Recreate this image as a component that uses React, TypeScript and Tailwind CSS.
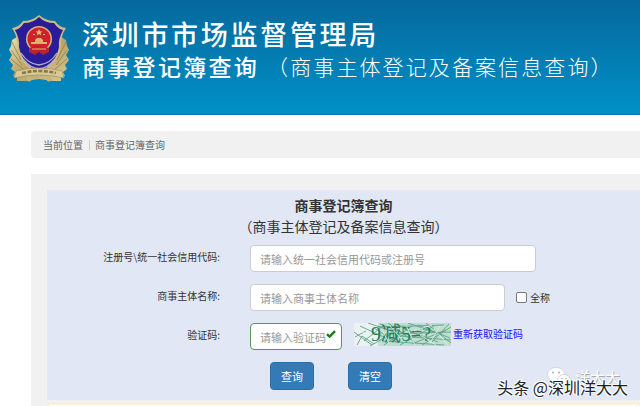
import { useState } from 'react';

function Emblem() {
  return (
    <svg viewBox="0 0 62 68" className="h-[68px] w-[62px] shrink-0" aria-hidden="true">
      <defs>
        <linearGradient id="gold" x1="0" y1="0" x2="1" y2="1">
          <stop offset="0" stopColor="#e9dfb0" />
          <stop offset="0.5" stopColor="#b9a468" />
          <stop offset="1" stopColor="#d9cb93" />
        </linearGradient>
      </defs>
      <path
        d="M9 22 L4 25 L3 31 L1 35 L4 40 L1 45 L5 50 L3 54 L7 57 L5 61 L9 63 L9 66 L17 66 L31 64 L45 66 L53 66 L53 63 L57 61 L55 57 L59 54 L57 50 L61 45 L58 40 L61 35 L59 31 L58 25 L53 22 Z"
        fill="url(#gold)"
      />
      <path d="M4 27 L13 45 M3 35 L14 50 M3 44 L15 54 M58 27 L49 45 M59 35 L48 50 M59 44 L47 54" stroke="#8f7d4b" strokeWidth="0.8" />
      <path d="M31 0 Q24 6 15 6 Q11 12 4 13 Q10 22 9 32 Q12 50 31 60 Q50 50 53 32 Q52 22 58 13 Q51 12 47 6 Q38 6 31 0 Z" fill="#cdbb80" />
      <path d="M31 2 Q25 8 16 8 Q12 14 7 15 Q12 24 11 32 Q14 48 31 58 Q48 48 51 32 Q50 24 55 15 Q50 14 46 8 Q37 8 31 2 Z" fill="#2a1c98" />
      <path d="M13 38 Q20 49 31 50 Q42 49 49 38 M16 45 Q22 53 31 54 Q40 53 46 45" fill="none" stroke="#b5add0" strokeWidth="1.3" />
      <circle cx="31" cy="24" r="13" fill="#d6b973" />
      <circle cx="31" cy="24" r="11.5" fill="#d0202c" />
      <path d="M31 14 l1 2.2 2.4 .2 -1.8 1.6 .6 2.3 -2.2 -1.3 -2.2 1.3 .6 -2.3 -1.8 -1.6 2.4 -.2 Z" fill="#e5bf68" />
      <path d="M25 19 h2 v1 h-2 Z M35 19 h2 v1 h-2 Z M27 25 l2 -2 h4 l2 2 v2 h4 v2 h-16 v-2 h4 Z" fill="#dcb36a" />
      <path d="M21 33 L31 31 L41 33 L41 37 L35 40 L31 37 L27 40 L21 37 Z" fill="#c02030" />
      <path d="M24 34 h14" stroke="#dcb36a" strokeWidth="1" />
      <path d="M8 56 Q31 50 54 56 L56 63 Q31 57 6 63 Z" fill="#d8ca97" stroke="#9a8753" strokeWidth="0.6" />
      <path d="M14 58 Q31 54 48 58" fill="none" stroke="#8a7843" strokeWidth="2.6" strokeDasharray="4 1.5" />
      <circle cx="21" cy="64" r="2.5" fill="#c7b67c" />
      <circle cx="41" cy="64" r="2.5" fill="#c7b67c" />
    </svg>
  );
}

function Captcha() {
  return (
    <svg viewBox="0 0 97 23" className="h-[23px] w-[97px] shrink-0" role="img" aria-label="9减5=?">
      <rect width="97" height="23" fill="#edf1f3" />
      <rect x="24" width="73" height="23" fill="#9ccbb8" opacity="0.55" />
      <path
        d="M0 9 L18 22 M1 14 L12 8 M3 22 L8 13 L20 21 M6 3 L32 15 M10 18 L30 2 M14 0 L40 9 M16 23 L46 6 M20 5 L44 20 M26 1 L60 14 M30 22 L58 3 M34 0 L62 20 M38 16 L70 5 M42 1 L74 17 M46 22 L80 3 M50 6 L84 19 M54 0 L88 12 M58 21 L92 7 M64 2 L96 15 M68 22 L97 4 M72 0 L97 20 M78 19 L95 1 M32 11 L97 9 M28 18 L90 22 M24 4 L90 2 M45 13 L97 17"
        fill="none"
        stroke="#5ba587"
        strokeWidth="0.9"
      />
      <text x="17" y="18" className="font-['Liberation_Serif','Noto_Sans_CJK_SC',serif] text-[20px]" fill="#23805a">
        9减5=?
      </text>
      <path
        d="M4 5 L16 15 M28 7 L35 20 M36 3 L50 19 M52 2 L61 22 M60 8 L78 2 M66 12 L82 22 M80 6 L94 22 M86 3 L76 20"
        fill="none"
        stroke="#e3f0ea"
        strokeWidth="0.8"
      />
    </svg>
  );
}

function WechatIcon() {
  return (
    <svg viewBox="0 0 24 20" className="h-5 w-6" aria-hidden="true">
      <ellipse cx="9" cy="7.5" rx="8.5" ry="7" fill="#fff" stroke="#c3c8d3" strokeWidth="0.6" />
      <path d="M3 12 L3 17 L8 14 Z" fill="#fff" />
      <ellipse cx="17" cy="13" rx="6.5" ry="5.5" fill="#fff" stroke="#b4b9c4" strokeWidth="0.6" />
      <circle cx="6" cy="5.5" r="1" fill="#a5aab8" />
      <circle cx="12" cy="5.5" r="1" fill="#a5aab8" />
      <circle cx="15" cy="11.5" r="0.8" fill="#a5aab8" />
      <circle cx="19" cy="11.5" r="0.8" fill="#a5aab8" />
    </svg>
  );
}

const rowClass = 'flex items-center';
const labelClass = 'mr-[30px] w-[173px] shrink-0 pb-1 text-right text-[10px] text-[#333]';
const inputClass =
  'h-[27px] rounded border border-[#ccc] bg-white px-[9px] text-[11px] text-[#555] outline-none placeholder:text-[#999]';
const buttonClass =
  'h-7 w-11 rounded border border-[#2e6da4] bg-[#337ab7] text-[11px] text-white hover:bg-[#286090]';

export default function App() {
  const [code, setCode] = useState('');
  const [name, setName] = useState('');
  const [captcha, setCaptcha] = useState('');
  const [exact, setExact] = useState(false);

  const handleClear = () => {
    setCode('');
    setName('');
    setCaptcha('');
    setExact(false);
  };

  return (
    <div className="relative h-screen overflow-hidden bg-white font-['Noto_Sans_CJK_SC',sans-serif]">
      <header className="flex h-[115px] items-start gap-3 border-b-2 border-[#0a7fb5] bg-linear-to-b from-[#05699d] to-[#0090c6] pt-[15px] pl-2 text-white">
        <Emblem />
        <div className="whitespace-nowrap">
          <h1 className="text-[27px] leading-[38px] font-medium tracking-widest">深圳市市场监督管理局</h1>
          <p className="flex items-center gap-2 leading-[26px]">
            <span className="text-[23px] font-medium tracking-widest">商事登记簿查询</span>
            <span className="text-[21px] font-light tracking-widest">（商事主体登记及备案信息查询）</span>
          </p>
        </div>
      </header>

      <nav className="mt-4 ml-[31px] flex h-[27px] items-center rounded-l bg-[#f1f1f1] px-3 text-[10px] text-[#666]">
        <span>当前位置</span>
        <span className="ml-[6px] h-[10px] border-l border-[#ccc]" />
        <a href="#" className="ml-[5px]">商事登记簿查询</a>
      </nav>

      <main className="mt-4 ml-[31px] bg-[#f1f1f1] pt-4 pl-4">
        <form className="bg-[#e1e7f5] pt-[5px] pb-[10px]" onSubmit={(e) => e.preventDefault()}>
          <h2 className="text-center text-[14px] leading-[21px] text-[#333]">
            <span className="block font-bold">商事登记簿查询</span>
            <span className="block">（商事主体登记及备案信息查询）</span>
          </h2>

          <div className="mt-2 flex flex-col gap-3">
            <div className={rowClass}>
              <label htmlFor="code" className={labelClass}>注册号\统一社会信用代码:</label>
              <input
                id="code"
                className={`${inputClass} w-[286px]`}
                placeholder="请输入统一社会信用代码或注册号"
                value={code}
                onChange={(e) => setCode(e.target.value)}
              />
            </div>
            <div className={rowClass}>
              <label htmlFor="name" className={labelClass}>商事主体名称:</label>
              <input
                id="name"
                className={`${inputClass} w-[255px]`}
                placeholder="请输入商事主体名称"
                value={name}
                onChange={(e) => setName(e.target.value)}
              />
              <label className="ml-[11px] flex items-center gap-[3px] text-[10px] text-[#333]">
                <input
                  type="checkbox"
                  className="size-[11px] appearance-none rounded-xs border border-[#767676] bg-white checked:bg-[#337ab7]"
                  checked={exact}
                  onChange={(e) => setExact(e.target.checked)}
                />
                全称
              </label>
            </div>
            <div className={rowClass}>
              <label htmlFor="captcha" className={labelClass}>验证码:</label>
              <div className="relative">
                <input
                  id="captcha"
                  className="block h-[27px] w-[92px] rounded border border-[#5a935f] bg-white px-[9px] text-[11px] text-[#555] outline-none placeholder:text-[#999]"
                  placeholder="请输入验证码"
                  value={captcha}
                  onChange={(e) => setCaptcha(e.target.value)}
                />
                <svg viewBox="0 0 10 8" className="absolute top-[7px] right-[6px] h-2 w-[10px]" aria-hidden="true">
                  <path d="M1 4.2 L3.6 6.6 L9 1.2" fill="none" stroke="#128012" strokeWidth="2.4" />
                </svg>
              </div>
              <div className="ml-3 flex items-center gap-[2px] pb-1">
                <Captcha />
                <a href="#" className="pb-[2px] text-[10px] text-[#1414ff]">重新获取验证码</a>
              </div>
            </div>
            <div className="flex gap-[34px] pl-[223px]">
              <button type="submit" className={buttonClass}>查询</button>
              <button type="button" className={buttonClass} onClick={handleClear}>清空</button>
            </div>
          </div>
        </form>
        <div className="mt-[3px] h-6 rounded-tl border border-[#faebcc] bg-[#fcf8e3]" />
      </main>

      <div className="absolute right-5 bottom-[19px] flex items-center gap-1 text-[15px] leading-5 text-white [text-shadow:1px_1px_0_#aaa]">
        <WechatIcon />
        <span>洋大大</span>
      </div>
      <div className="absolute right-3 bottom-[9px] text-[16px] leading-5 text-[#222] [text-shadow:-1px_-1px_0_#fff,1px_-1px_0_#fff,-1px_1px_0_#fff]">
        头条 @深圳洋大大
      </div>
    </div>
  );
}
